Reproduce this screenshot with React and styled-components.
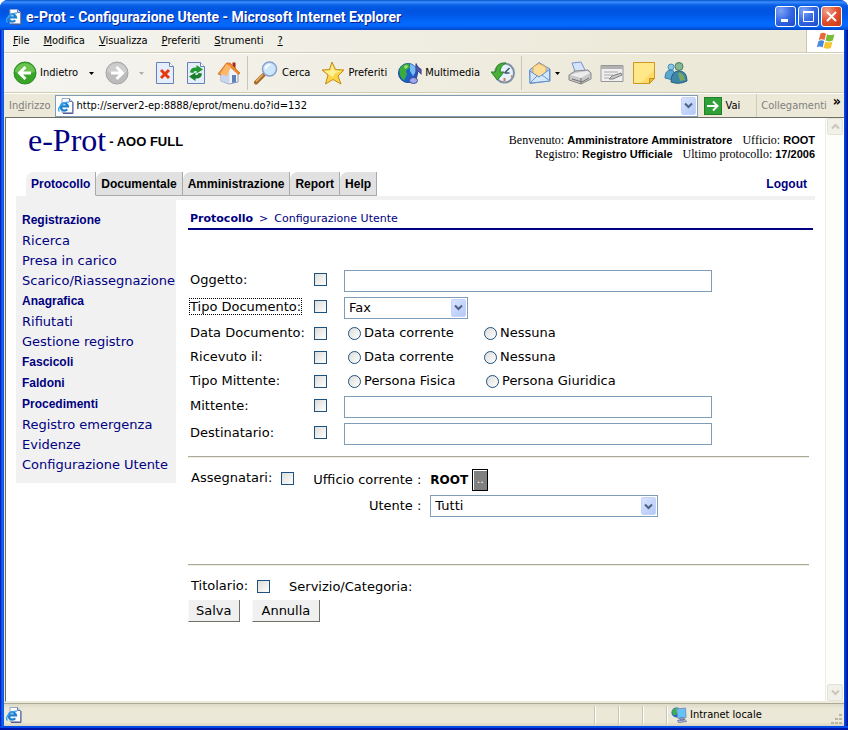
import React from "react";
import styled, { createGlobalStyle, css } from "styled-components";

const UI = '"DejaVu Sans Condensed", "DejaVu Sans", sans-serif';
const PAGE = '"DejaVu Sans", Verdana, sans-serif';
const BOLD = '"Liberation Sans", Arial, sans-serif';
const NAVY = "#000080";

const GlobalStyle = createGlobalStyle`
  * { box-sizing: border-box; }
  body { margin: 0; background: #fff; font: 11px/16px ${UI}; color: #000; }
  button, input, select { font: inherit; color: inherit; border-radius: 0; }
  a { color: inherit; text-decoration: none; }
`;

/* ---------- window frame ---------- */

const Frame = styled.div`
  display: flex;
  flex-direction: column;
  min-height: 100vh;
  background: linear-gradient(to right, #0010b4 0, #0831d9 1px, #166aee 2px, #0055e5 4px, #0055e5 calc(100% - 4px), #0040e0 calc(100% - 3px), #001ea0 calc(100% - 1px), #001090 100%);
  border-radius: 8px 8px 0 0;
  padding: 0 4px 4px;
  box-shadow: inset 0 -2px 0 #0014a8, inset 0 -4px 0 #0048e8;
`;

const TitleBar = styled.header`
  display: flex;
  align-items: center;
  gap: 4px;
  height: 30px;
  margin: 0 -4px;
  padding: 3px 6px 0 6px;
  border-radius: 8px 8px 0 0;
  background: linear-gradient(#0450c8 0, #3c90ff 2px, #0a5fe8 5px, #0055e0 9px, #0056e4 14px, #0368fb 22px, #0368fb 26px, #0046c8 30px);
`;

const Title = styled.h1`
  flex: 1;
  margin: 0;
  font: bold 14px/18px Roboto, "Noto Sans", sans-serif;
  color: #fff;
  text-shadow: 1px 1px 0 #0a1f8f;
  white-space: nowrap;
`;

const Captions = styled.div`
  display: flex;
  gap: 2px;
`;

const CaptionButton = styled.button`
  display: grid;
  place-items: center;
  width: 21px;
  height: 21px;
  padding: 0;
  border: 1px solid #fff;
  border-radius: 3px;
  background: ${(p) =>
    p.$close
      ? "radial-gradient(circle at 25% 20%, #f0a088, #e25030 50%, #c83810)"
      : "radial-gradient(circle at 25% 20%, #7fa4f4, #3468e4 50%, #1c49c8)"};
`;

const Chrome = styled.div`
  display: flex;
  flex-direction: column;
  flex: 1;
  background: #ece9d8;
`;

const MenuBar = styled.nav`
  display: flex;
  height: 23px;
  background: linear-gradient(to right, #f4f4f0, #ece9d8 80%);
  border-bottom: 1px solid #d0ccb8;
`;

const MenuItems = styled.div`
  display: flex;
  flex: 1;
  align-items: center;
  gap: 14px;
  padding: 0 9px;
`;

const FlatButton = styled.button`
  display: flex;
  align-items: center;
  gap: ${(p) => p.$gap || 0}px;
  padding: 0;
  border: 0;
  background: none;
  white-space: nowrap;
`;

const FlagPane = styled.div`
  display: grid;
  place-items: center;
  width: 38px;
  border-left: 1px solid #c8c4b0;
  background: #fff;
`;

const ToolBar = styled.div`
  display: flex;
  align-items: center;
  height: 40px;
  padding: 0 9px;
  border-top: 1px solid #fff;
  border-bottom: 1px solid #d0ccb8;
  background: linear-gradient(to right, #f5f4f0, #ece9d8 80%);
`;

const ToolGroup = styled.div`
  display: flex;
  align-items: center;
  gap: ${(p) => p.$gap}px;
`;

const Divider = styled.span`
  align-self: stretch;
  width: 1px;
  margin: 2px 6px;
  background: #cbc7b4;
`;

const AddressBar = styled.div`
  display: flex;
  align-items: center;
  height: 24px;
  padding: 0 3px 0 5px;
  border-top: 1px solid #fff;
  color: #808080;
`;

const AddressBox = styled.div`
  display: flex;
  align-items: center;
  flex: 1;
  height: 22px;
  margin: 0 6px 0 4px;
  padding: 0 1px 0 2px;
  border: 1px solid #7f9db9;
  background: #fff;
  color: #000;
`;

const AddressInput = styled.input`
  flex: 1;
  min-width: 0;
  padding: 0 3px;
  border: 0;
  outline: 0;
  background: none;
`;

const arrowFace = css`
  display: grid;
  place-items: center;
  width: 15px;
  height: 18px;
  padding: 0;
  border: 1px solid #c4d4f8;
  border-radius: 2px;
  background: linear-gradient(135deg, #d8e4ff, #b4c8f6);
`;

const ArrowButton = styled.button`
  ${arrowFace}
`;

const GoButton = styled(FlatButton)`
  color: #000;
  padding-right: 16px;
`;

const Links = styled(FlatButton)`
  align-self: stretch;
  padding-left: 4px;
  border-left: 1px solid #d0ccb8;
`;

const Chevrons = styled.span`
  align-self: flex-start;
  margin-left: 6px;
  font-weight: bold;
  font-size: 14px;
  line-height: 14px;
  color: #000;
`;

/* ---------- client area ---------- */

const Client = styled.div`
  display: flex;
  flex: 1;
  margin: 0 0 1px 1px;
  border: 1px solid #716f64;
  border-right: 0;
  border-bottom-color: #ece9d8;
  background: #fff;
`;

const ScrollBar = styled.div`
  display: flex;
  flex-direction: column;
  justify-content: space-between;
  width: 18px;
  margin-right: 1px;
  padding: 0 1px;
  border-left: 1px solid #eeede5;
  background: #fdfdfa;
`;

const ScrollButton = styled.button`
  display: grid;
  place-items: center;
  width: 16px;
  height: 17px;
  padding: 0;
  border: 1px solid #e4e3d8;
  border-radius: 2px;
  background: #f1f0e9;
`;

const Page = styled.main`
  flex: 1;
  min-width: 0;
  padding: 1px 10px 0;
`;

const PageHeader = styled.div`
  display: flex;
  align-items: flex-start;
  justify-content: space-between;
  height: 53px;
  padding-left: 12px;
`;

const Brand = styled.div`
  display: flex;
  align-items: center;
  gap: 3px;
  font: bold 13px/18px ${BOLD};
  white-space: nowrap;
`;

const BrandName = styled.span`
  font: 32px/42px "Liberation Serif", serif;
  color: ${NAVY};
`;

const BrandUnit = styled.span`
  padding-top: 3px;
`;

const Session = styled.div`
  padding-top: 14px;
  text-align: right;
  font: 12px/14px "Liberation Serif", serif;
  white-space: nowrap;

  b { font: bold 11px/14px ${BOLD}; }
  span + span { margin-left: 10px; }
`;

const TabRow = styled.nav`
  display: flex;
  align-items: center;
  height: 24px;
  padding: 0 8px 0 10px;
  font: bold 12px/16px ${BOLD};
`;

const Tab = styled.a`
  height: 24px;
  padding: 4px 5px 0 5px;
  border: solid #aaa;
  border-width: 0 1px 1px 0;
  border-top-left-radius: 8px;
  background: #e1e1e1;
  ${(p) =>
    p.$active &&
    css`
      border-bottom-color: #f1f1f1;
      background: #f1f1f1;
      color: ${NAVY};
    `}
`;

const Logout = styled.a`
  margin-left: auto;
  color: ${NAVY};
`;

const Columns = styled.div`
  display: flex;
  align-items: flex-start;
  gap: 12px;
  border-top: 4px solid #f1f1f1;
`;

const Side = styled.nav`
  display: flex;
  flex-direction: column;
  flex: none;
  width: 160px;
  padding: 10px 0 8px 6px;
  background: #f1f1f1;
  color: ${NAVY};
  white-space: nowrap;
`;

const SideHead = styled.a`
  font: bold 12px/21px ${BOLD};
`;

const SideLink = styled.a`
  font: 13px/20px ${PAGE};
`;

const Content = styled.section`
  flex: 1;
  min-width: 0;
  padding-right: 2px;
  font: 13px/18px ${PAGE};
`;

const Crumbs = styled.div`
  display: flex;
  gap: 6px;
  height: 30px;
  margin-bottom: 37px;
  padding: 10px 2px 0;
  border-bottom: 2px solid ${NAVY};
  font-size: 11px;
  color: ${NAVY};
`;

const Form = styled.form`
  margin-right: 4px;
`;

const Check = styled.input.attrs({ type: "checkbox" })`
  appearance: none;
  width: 13px;
  height: 13px;
  margin: 0;
  border: 1px solid #1c5180;
  background: linear-gradient(135deg, #dcdcd7, #fff);
`;

const Radio = styled(Check).attrs({ type: "radio" })`
  border-radius: 50%;
`;

const Row = styled.div`
  display: grid;
  grid-template-columns: 124px 30px 1fr;
  align-items: center;
  height: ${(p) => (p.$radios ? 24 : 27)}px;
  padding-left: 2px;

  > label { margin-bottom: ${(p) => (p.$radios ? 0 : 2)}px; }
  > ${Check} { margin-bottom: ${(p) => (p.$radios ? 0 : 2)}px; }
`;

const Label = styled.label`
  justify-self: start;
  white-space: nowrap;
  ${(p) => p.$focus && "outline: 1px dotted #000; line-height: 15px;"}
`;

const TextBox = styled.input`
  width: 100%;
  max-width: 368px;
  height: 22px;
  padding: 0 4px;
  border: 1px solid #7f9db9;
  background: #fff;
`;

const SelectBox = styled.div`
  display: grid;
  align-items: center;
  width: ${(p) => p.$width}px;

  > * { grid-area: 1 / 1; }
`;

const Select = styled.select`
  appearance: none;
  width: 100%;
  height: 22px;
  padding: 0 20px 0 4px;
  border: 1px solid #7f9db9;
  background: #fff;
`;

const SelectArrow = styled.span`
  ${arrowFace}
  justify-self: end;
  margin-right: 2px;
  pointer-events: none;
`;

const Radios = styled.div`
  display: grid;
  grid-template-columns: ${(p) => (p.$wide ? 138 : 136)}px 1fr;
  padding-left: 4px;
`;

const Choice = styled.label`
  display: flex;
  align-items: center;
  gap: 3px;
  white-space: nowrap;
`;

const Rule = styled.hr`
  height: 2px;
  margin: ${(p) => p.$top}px 0 0;
  border: 0;
  border-top: 1px solid #aca899;
  border-bottom: 1px solid #f0eee0;
`;

const Section = styled.div`
  display: flex;
  align-items: flex-start;
  gap: 19px;
  padding: 10px 0 0 3px;
`;

const CheckLabel = styled.label`
  display: flex;
  align-items: center;
  gap: 9px;
  padding-top: 1px;
`;

const Caption = styled.span`
  padding-top: 2px;
`;

const Assignee = styled.div`
  display: grid;
  grid-template-columns: auto 1fr;
  grid-template-rows: 24px 28px;
  column-gap: 9px;
  align-items: center;
  justify-items: start;

  > label, > span { justify-self: end; }
`;

const Office = styled.div`
  display: flex;
  align-items: center;
  gap: 4px;
  font: bold 12px/16px ${PAGE};
`;

const PickButton = styled.button`
  width: 16px;
  height: 22px;
  padding: 0;
  border: 1px solid #000;
  background: #808080;
  box-shadow: inset 1px 1px 0 #fff;
  color: #fff;
  font: 11px/16px ${PAGE};
`;

const Actions = styled.div`
  display: flex;
  gap: 12px;
  padding-top: 4px;
`;

const PushButton = styled.button`
  height: 22px;
  padding: 0 ${(p) => p.$pad}px;
  border: solid #716f64;
  border-width: 0 1px 1px 0;
  border-left: 1px solid #f8f8f8;
  background: #f0f0f0;
`;

/* ---------- status bar ---------- */

const StatusBar = styled.footer`
  display: flex;
  align-items: center;
  height: 23px;
  padding-left: 2px;
  border-top: 1px solid #aca899;
  background: linear-gradient(#dedac8, #ebe8d7 5px, #ebe8d7 18px, #d8d4c0);
`;

const StatusIcon = styled.span`
  display: flex;
  flex: 1;
`;

const StatusPane = styled.span`
  align-self: stretch;
  display: flex;
  align-items: center;
  gap: 3px;
  width: ${(p) => p.$width}px;
  margin: 2px 0;
  padding-left: 4px;
  border-left: 1px solid #c9c5b2;
  box-shadow: inset 1px 0 0 #fff;
`;

const Grip = styled.svg`
  align-self: flex-end;
`;

/* ---------- icons ---------- */

const Svg = ({ w = 24, h = w, box = 24, children }) => (
  <svg width={w} height={h} viewBox={`0 0 ${box} ${(box * h) / w}`} fill="none" aria-hidden="true">
    {children}
  </svg>
);

const PageE = () => (
  <Svg w={16} box={16}>
    <path d="M4 .5h7.500l3 3v11H4z" fill="#fff" stroke="#98a8cc" />
    <path d="M11.500.5v3h3" fill="#c8d4ec" stroke="#6078b0" />
    <path d="M15 4v11.500H5" stroke="#505a90" />
    <path d="M9.200 11.300A3.700 3.700 0 1 1 10 8.300H3.500" stroke="#1c80d0" strokeWidth="2.200" />
    <path d="M1.500 13.500C-1.500 10.500 5 3 11 4.200" stroke="#38a4e8" strokeWidth="1.300" />
  </Svg>
);

const Down = ({ color = "#4d6185" }) => (
  <Svg w={9} h={7} box={9}>
    <path d="M1 1.500l3.500 3.500L8 1.500" stroke={color} strokeWidth="2" />
  </Svg>
);

const Up = () => (
  <Svg w={9} h={7} box={9}>
    <path d="M1 5.500L4.500 2 8 5.500" stroke="#c9c7ba" strokeWidth="2" />
  </Svg>
);

const Caret = ({ color = "#000" }) => (
  <Svg w={5} h={3} box={5}>
    <path d="M0 0h5L2.500 3z" fill={color} />
  </Svg>
);

const Flag = () => (
  <Svg w={20} h={18} box={20}>
    <path d="M4.500 1.500Q7-.2 10 1.700L8.500 8Q5.500 6.500 2.800 8z" fill="#e8683c" />
    <path d="M11 2.200q3 1.700 7.500 0L16.800 8.600q-3.500 1.600-7.200-.1z" fill="#78bc38" />
    <path d="M2.500 9Q5.500 7.500 8.200 9L6.600 15.500Q3.500 13.800.8 15.300z" fill="#4a88e0" />
    <path d="M9.300 9.500q3.300 1.700 7.200.2l-1.700 6.200q-3.600 1.700-7.200-.2z" fill="#f6c32c" />
  </Svg>
);

const Round = ({ on }) => (
  <Svg>
    <circle cx="12" cy="12" r="11" fill={on ? "#38a428" : "#bcbcbc"} stroke={on ? "#2c8c28" : "#a4a4a4"} />
    <path d="M2 11a10 9 0 0 1 20 0q-10 3-20 0z" fill={on ? "#80d060" : "#d4d4d4"} opacity=".7" />
    {on ? (
      <path d="M12.500 6l-6 6 6 6M7 12h11" stroke="#fff" strokeWidth="3" />
    ) : (
      <path d="M11.500 6l6 6-6 6M17 12H6" stroke="#fff" strokeWidth="3" />
    )}
  </Svg>
);

const Sheet = ({ children }) => (
  <Svg w={20} h={24} box={20}>
    <path d="M1.500 1.500h13l4 4v17h-17z" fill="#e4eefc" stroke="#6880b8" />
    <path d="M14.500 1.500v4h4" fill="#fff" stroke="#6880b8" />
    {children}
  </Svg>
);

const Stop = () => (
  <Sheet>
    <path d="M6 9l8 8M14 9l-8 8" stroke="#e83810" strokeWidth="3" />
  </Sheet>
);

const Refresh = () => (
  <Sheet>
    <path d="M4 11.500Q4.500 6 10.500 6.500V4L17 8.500 10.500 12.500V10Q7.500 9.500 7.500 12z" fill="#209830" />
    <path d="M16 12.500q-.5 5.500-6.500 5v2.500L3 15.500l6.500-4V14q3 .5 3-2z" fill="#188028" />
  </Sheet>
);

const Home = () => (
  <Svg>
    <path d="M15.500 1.500h3v7h-3z" fill="#a82818" />
    <path d="M4 12l7-9 10 8v10l-9 2-8-3z" fill="#f2f4fc" stroke="#8c98b8" />
    <path d="M4 12l7-8 1.500 9v10L4 20z" fill="#c8d6f0" />
    <path d="M1 13L9.500 2 13 2l10 10-1.500 1.500L11 4 3.500 14z" fill="#f08830" stroke="#d07020" strokeWidth=".8" />
    <path d="M9.500 3L3 13l7 2 4-9z" fill="#fcb868" />
    <path d="M15 14h4v7l-4 1z" fill="#6080b8" />
  </Svg>
);

const Search = () => (
  <Svg>
    <path d="M9.500 14L2 21.500" stroke="#a86828" strokeWidth="4" strokeLinecap="round" />
    <path d="M9 13.500L2 20.500" stroke="#e8b468" strokeWidth="1.500" />
    <circle cx="15.500" cy="8" r="7" fill="#cce6fc" stroke="#88a0d0" strokeWidth="1.500" />
    <path d="M10.500 7q2-4.500 7-4Q13 5 12 9z" fill="#fff" />
  </Svg>
);

const Star = () => (
  <Svg>
    <path d="M11 1l3.500 7.500L23 9l-6 6 3 8-8-4.500L4.500 23 7 14 1 9l7.500-.5z" fill="#fcd448" stroke="#c48c18" />
    <path d="M11 3.500l2.500 6 6 .8-5.500 2L12 16 8.500 14 3.500 10l6-.5z" fill="#fff094" />
  </Svg>
);

const Media = () => (
  <Svg>
    <circle cx="10" cy="12" r="9.500" fill="#1c60c8" stroke="#104898" />
    <path d="M12 3q5 1 7 6l-4 6-3-5z" fill="#78bcf4" />
    <path d="M2 7q4-5 9-4.500l1 4-4 3 1 4-3 6Q0 15 2 7z" fill="#38ac3c" />
    <path d="M6 5l3-1 1 2-3 2z" fill="#a8e070" />
    <path d="M18 2.500V19M18 2.500q1 4 5 6v4q-3-3-5-3.500" fill="#5860b8" stroke="#404898" strokeWidth="1.200" />
    <ellipse cx="15.500" cy="19.500" rx="4" ry="3" fill="#a0a8ec" stroke="#404898" />
  </Svg>
);

const History = () => (
  <Svg>
    <circle cx="13.500" cy="12" r="9.500" fill="#e4f2fc" stroke="#8090a0" strokeWidth="2" />
    <path d="M13.500 12l5-5M13.500 12h5" stroke="#405078" strokeWidth="1.500" />
    <path d="M13.500 17v3M20 15l1 .5" stroke="#e07050" strokeWidth="2" />
    <path d="M15 2Q5 1 4.500 11H0l6.500 8 6.500-8H9q0-6 6-9z" fill="#48b038" stroke="#2c8428" />
  </Svg>
);

const Mail = () => (
  <Svg>
    <path d="M1.500 9L11 1.500 22 8v12L2 22.500z" fill="#a8ccf4" stroke="#6890cc" />
    <path d="M5 6l6-3.500L18 6v7l-6 3-7-3z" fill="#fcdc98" stroke="#e0a850" />
    <path d="M2 10l9 6 10.500-7.500V20L2 22z" fill="#d4e8fc" stroke="#6890cc" />
    <path d="M2 22l7-7M22 20l-8-6" stroke="#6890cc" />
  </Svg>
);

const Print = () => (
  <Svg>
    <path d="M4 2l9-1 5 10-10 2z" fill="#d4e4fc" stroke="#7890c8" />
    <path d="M1 14l6-4 13-1 3 3v6l-10 5-12-4z" fill="#c8c8c8" stroke="#888" />
    <path d="M2 14l11 3 9-5-3-2-11 2z" fill="#ececec" />
    <path d="M4 18l10 3 7-4M13 17v6" stroke="#707070" />
  </Svg>
);

const Edit = () => (
  <Svg>
    <path d="M1 4.500h22v16H1z" fill="#f0f0f0" stroke="#989898" />
    <path d="M1 5h22v3H1z" fill="#b0b0b0" />
    <path d="M4 11h14M4 14h9M4 17h5" stroke="#a8a8a8" />
    <path d="M9 18l3-3 9-3 1 2-9 4z" fill="#c8c8c8" stroke="#808080" />
  </Svg>
);

const Note = () => (
  <Svg>
    <path d="M1.500 1.500h21v16l-5 5h-16z" fill="#fcdc68" stroke="#d09820" />
    <path d="M2 2h20v7L9 22H2z" fill="#fff0a0" opacity=".6" />
    <path d="M22.500 17.500l-5 5v-5z" fill="#f0b838" stroke="#c88c18" />
  </Svg>
);

const People = () => (
  <Svg>
    <circle cx="7" cy="6" r="3" fill="#88c8e4" stroke="#4890b8" />
    <path d="M1 17q0-8 6-8 4 0 4 6l-2 4z" fill="#58a8d0" stroke="#3880a8" />
    <circle cx="15" cy="5.500" r="4" fill="#88b890" stroke="#487868" />
    <path d="M7 21q0-11 8-11t8 10q-8 4-16 1z" fill="#3c84a8" stroke="#28607c" />
    <path d="M14 12q3-2 6 3l1 4-5 1z" fill="#78a860" />
  </Svg>
);

const Go = () => (
  <Svg w={18} box={18}>
    <rect x=".5" y=".5" width="17" height="17" fill="#30a038" stroke="#208028" />
    <path d="M3 9h10M9 4.500L13.500 9 9 13.500" stroke="#fff" strokeWidth="2" />
  </Svg>
);

const Network = () => (
  <Svg w={16} box={16}>
    <circle cx="5.500" cy="5.500" r="5" fill="#2468c8" />
    <path d="M1 4q3-4 6-3L5 8 2 8z" fill="#40b048" />
    <path d="M5.500 2l9-1 .5 9.500-8 1z" fill="#60c4f4" stroke="#8090c0" />
    <path d="M9 11h4v2H9zM6.500 13.500L14 12.500l1.500 2-8 1z" fill="#b8c4e4" stroke="#606898" strokeWidth=".8" />
  </Svg>
);

/* ---------- data ---------- */

const MENUS = ["File", "Modifica", "Visualizza", "Preferiti", "Strumenti", "?"];
const TABS = ["Protocollo", "Documentale", "Amministrazione", "Report", "Help"];
const SIDE = [
  ["Registrazione", true],
  ["Ricerca"],
  ["Presa in carico"],
  ["Scarico/Riassegnazione"],
  ["Anagrafica", true],
  ["Rifiutati"],
  ["Gestione registro"],
  ["Fascicoli", true],
  ["Faldoni", true],
  ["Procedimenti", true],
  ["Registro emergenza"],
  ["Evidenze"],
  ["Configurazione Utente"],
];
const FIELDS = [
  { id: "oggetto", label: "Oggetto:" },
  { id: "tipodoc", label: "Tipo Documento:", select: "Fax" },
  { id: "datadoc", label: "Data Documento:", radios: ["Data corrente", "Nessuna"] },
  { id: "ricevuto", label: "Ricevuto il:", radios: ["Data corrente", "Nessuna"] },
  { id: "tipomitt", label: "Tipo Mittente:", radios: ["Persona Fisica", "Persona Giuridica"], wide: true },
  { id: "mittente", label: "Mittente:" },
  { id: "destinatario", label: "Destinatario:" },
];

const DropDown = ({ id, value, width, label }) => (
  <SelectBox $width={width}>
    <Select id={id} aria-label={label} defaultValue={value}>
      <option>{value}</option>
    </Select>
    <SelectArrow>
      <Down />
    </SelectArrow>
  </SelectBox>
);

const Field = ({ id, label, select, radios, wide }) => (
  <Row $radios={!!radios}>
    <Label htmlFor={`${id}-on`} $focus={!!select}>{label}</Label>
    <Check id={`${id}-on`} />
    {radios ? (
      <Radios $wide={wide}>
        {radios.map((text) => (
          <Choice key={text}>
            <Radio name={id} />
            {text}
          </Choice>
        ))}
      </Radios>
    ) : select ? (
      <DropDown id={id} value={select} width={124} label={label} />
    ) : (
      <TextBox id={id} type="text" aria-label={label} />
    )}
  </Row>
);

export default function App() {
  return (
    <>
      <GlobalStyle />
      <Frame>
        <TitleBar>
          <PageE />
          <Title>e-Prot - Configurazione Utente - Microsoft Internet Explorer</Title>
          <Captions>
            <CaptionButton aria-label="Riduci a icona">
              <Svg w={15} box={15}><path d="M3 11.500h7" stroke="#fff" strokeWidth="3" /></Svg>
            </CaptionButton>
            <CaptionButton aria-label="Ingrandisci">
              <Svg w={15} box={15}><path d="M2.500 3v9.500h10V3" stroke="#fff" /><path d="M2 3h11" stroke="#fff" strokeWidth="2" /></Svg>
            </CaptionButton>
            <CaptionButton $close aria-label="Chiudi">
              <Svg w={15} box={15}><path d="M3 3l9 9M12 3l-9 9" stroke="#fff" strokeWidth="2" /></Svg>
            </CaptionButton>
          </Captions>
        </TitleBar>
        <Chrome>
          <MenuBar>
            <MenuItems>
              {MENUS.map((m) => (
                <FlatButton key={m}><span><u>{m[0]}</u>{m.slice(1)}</span></FlatButton>
              ))}
            </MenuItems>
            <FlagPane><Flag /></FlagPane>
          </MenuBar>
          <ToolBar>
            <ToolGroup $gap={11}>
              <FlatButton $gap={3}><Round on />Indietro</FlatButton>
              <Caret />
              <FlatButton $gap={10} aria-label="Avanti"><Round /><Caret color="#b0aea0" /></FlatButton>
              <FlatButton aria-label="Termina"><Stop /></FlatButton>
              <FlatButton aria-label="Aggiorna"><Refresh /></FlatButton>
              <FlatButton aria-label="Pagina iniziale"><Home /></FlatButton>
            </ToolGroup>
            <Divider />
            <ToolGroup $gap={11}>
              <FlatButton $gap={4}><Search />Cerca</FlatButton>
              <FlatButton $gap={3}><Star />Preferiti</FlatButton>
              <FlatButton $gap={3}><Media />Multimedia</FlatButton>
              <FlatButton aria-label="Cronologia"><History /></FlatButton>
            </ToolGroup>
            <Divider />
            <ToolGroup $gap={8}>
              <FlatButton $gap={3} aria-label="Posta"><Mail /><Caret /></FlatButton>
              <FlatButton aria-label="Stampa"><Print /></FlatButton>
              <FlatButton aria-label="Modifica pagina"><Edit /></FlatButton>
              <FlatButton aria-label="Discussione"><Note /></FlatButton>
              <FlatButton aria-label="Messenger"><People /></FlatButton>
            </ToolGroup>
          </ToolBar>
          <AddressBar>
            <label htmlFor="address">In<u>d</u>irizzo</label>
            <AddressBox>
              <PageE />
              <AddressInput id="address" defaultValue="http://server2-ep:8888/eprot/menu.do?id=132" />
              <ArrowButton aria-label="Indirizzi recenti"><Down /></ArrowButton>
            </AddressBox>
            <GoButton $gap={4}><Go />Vai</GoButton>
            <Links>Collegamenti<Chevrons>»</Chevrons></Links>
          </AddressBar>
          <Client>
            <Page>
              <PageHeader>
                <Brand><BrandName>e-Prot</BrandName><BrandUnit>- AOO FULL</BrandUnit></Brand>
                <Session>
                  <div>
                    <span>Benvenuto: <b>Amministratore Amministratore</b></span>
                    <span>Ufficio: <b>ROOT</b></span>
                  </div>
                  <div>
                    <span>Registro: <b>Registro Ufficiale</b></span>
                    <span>Ultimo protocollo: <b>17/2006</b></span>
                  </div>
                </Session>
              </PageHeader>
              <TabRow>
                {TABS.map((t, i) => (
                  <Tab key={t} href="#" $active={i === 0}>{t}</Tab>
                ))}
                <Logout href="#">Logout</Logout>
              </TabRow>
              <Columns>
                <Side>
                  {SIDE.map(([text, head]) =>
                    head ? (
                      <SideHead key={text} href="#">{text}</SideHead>
                    ) : (
                      <SideLink key={text} href="#">{text}</SideLink>
                    )
                  )}
                </Side>
                <Content>
                  <Crumbs><b>Protocollo</b><span>&gt;</span><span>Configurazione Utente</span></Crumbs>
                  <Form onSubmit={(e) => e.preventDefault()}>
                    {FIELDS.map((f) => <Field key={f.id} {...f} />)}
                    <Rule $top={9} />
                    <Section>
                      <CheckLabel>Assegnatari: <Check /></CheckLabel>
                      <Assignee>
                        <span>Ufficio corrente :</span>
                        <Office>ROOT <PickButton type="button" aria-label="Scegli ufficio">..</PickButton></Office>
                        <label htmlFor="utente">Utente :</label>
                        <DropDown id="utente" value="Tutti" width={228} />
                      </Assignee>
                    </Section>
                    <Rule $top={44} />
                    <Section>
                      <CheckLabel>Titolario: <Check /></CheckLabel>
                      <Caption>Servizio/Categoria:</Caption>
                    </Section>
                    <Actions>
                      <PushButton type="submit" $pad={7}>Salva</PushButton>
                      <PushButton type="reset" $pad={9}>Annulla</PushButton>
                    </Actions>
                  </Form>
                </Content>
              </Columns>
            </Page>
            <ScrollBar>
              <ScrollButton disabled aria-label="Scorri su"><Up /></ScrollButton>
              <ScrollButton disabled aria-label="Scorri giù"><Down color="#c9c7ba" /></ScrollButton>
            </ScrollBar>
          </Client>
          <StatusBar>
            <StatusIcon><PageE /></StatusIcon>
            <StatusPane $width={24} />
            <StatusPane $width={24} />
            <StatusPane $width={24} />
            <StatusPane $width={165}><Network />Intranet locale</StatusPane>
            <Grip width="13" height="13" viewBox="0 0 13 13" aria-hidden="true">
              <path d="M8 1h3v2H8zM4 5h3v2H4zM8 5h3v2H8zM0 9h3v2H0zM4 9h3v2H4zM8 9h3v2H8z" fill="#b8b4a0" />
            </Grip>
          </StatusBar>
        </Chrome>
      </Frame>
    </>
  );
}
